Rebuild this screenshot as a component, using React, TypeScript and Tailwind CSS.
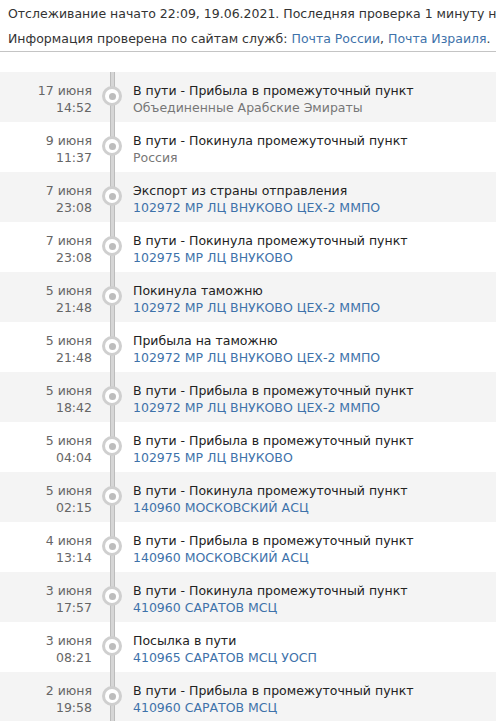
import React from "react";

type Item = {
  date: string;
  time: string;
  title: string;
  place: string;
  link?: boolean;
};

const items: Item[] = [
  { date: "17 июня", time: "14:52", title: "В пути - Прибыла в промежуточный пункт", place: "Объединенные Арабские Эмираты" },
  { date: "9 июня", time: "11:37", title: "В пути - Покинула промежуточный пункт", place: "Россия" },
  { date: "7 июня", time: "23:08", title: "Экспорт из страны отправления", place: "102972 МР ЛЦ ВНУКОВО ЦЕХ-2 ММПО", link: true },
  { date: "7 июня", time: "23:08", title: "В пути - Покинула промежуточный пункт", place: "102975 МР ЛЦ ВНУКОВО", link: true },
  { date: "5 июня", time: "21:48", title: "Покинула таможню", place: "102972 МР ЛЦ ВНУКОВО ЦЕХ-2 ММПО", link: true },
  { date: "5 июня", time: "21:48", title: "Прибыла на таможню", place: "102972 МР ЛЦ ВНУКОВО ЦЕХ-2 ММПО", link: true },
  { date: "5 июня", time: "18:42", title: "В пути - Прибыла в промежуточный пункт", place: "102972 МР ЛЦ ВНУКОВО ЦЕХ-2 ММПО", link: true },
  { date: "5 июня", time: "04:04", title: "В пути - Прибыла в промежуточный пункт", place: "102975 МР ЛЦ ВНУКОВО", link: true },
  { date: "5 июня", time: "02:15", title: "В пути - Покинула промежуточный пункт", place: "140960 МОСКОВСКИЙ АСЦ", link: true },
  { date: "4 июня", time: "13:14", title: "В пути - Прибыла в промежуточный пункт", place: "140960 МОСКОВСКИЙ АСЦ", link: true },
  { date: "3 июня", time: "17:57", title: "В пути - Покинула промежуточный пункт", place: "410960 САРАТОВ МСЦ", link: true },
  { date: "3 июня", time: "08:21", title: "Посылка в пути", place: "410965 САРАТОВ МСЦ УОСП", link: true },
  { date: "2 июня", time: "19:58", title: "В пути - Прибыла в промежуточный пункт", place: "410960 САРАТОВ МСЦ", link: true },
];

export default function App() {
  return (
    <div className="w-[496px] h-[721px] overflow-hidden bg-white text-[12.5px] text-[#333] font-['DejaVu_Sans',sans-serif]">
      {/* tracking header */}
      <div className="border-b border-[#c4c4c4] pl-[8px] pt-[5px] pb-[4px] leading-[17px] whitespace-nowrap overflow-hidden">
        <p>Отслеживание начато 22:09, 19.06.2021. Последняя проверка 1 минуту назад.</p>
        <p className="mt-[8px]">
          Информация проверена по сайтам служб:{" "}
          <a className="text-[#3e72aa]">Почта России</a>,{" "}
          <a className="text-[#3e72aa]">Почта Израиля</a>.
        </p>
      </div>

      {/* timeline */}
      <ul className="mt-[20px]">
        {items.map((it, i) => (
          <li
            key={i}
            className={`flex h-[50px] leading-[17px] ${i % 2 === 0 ? "bg-[#f4f4f4]" : "bg-white"}`}
          >
            <div className="w-[92px] shrink-0 pt-[10px] text-right text-[#666]">
              <div>{it.date}</div>
              <div>{it.time}</div>
            </div>
            <div className="relative w-[41px] shrink-0">
              <div className="absolute left-[18px] top-0 h-full w-[5px] border-x border-[#bcbcbc] bg-[#d6d6d6]" />
              <div className="absolute left-[10px] top-[14px] flex h-[20px] w-[20px] items-center justify-center rounded-full border-[3px] border-[#cfcfcf] bg-white">
                <div className="h-[7px] w-[7px] rounded-full bg-[#bdbdbd]" />
              </div>
            </div>
            <div className="min-w-0 pt-[10px] whitespace-nowrap">
              <div className="text-[#222]">{it.title}</div>
              <div className={it.link ? "text-[#3e72aa]" : "text-[#777]"}>{it.place}</div>
            </div>
          </li>
        ))}
      </ul>
    </div>
  );
}
